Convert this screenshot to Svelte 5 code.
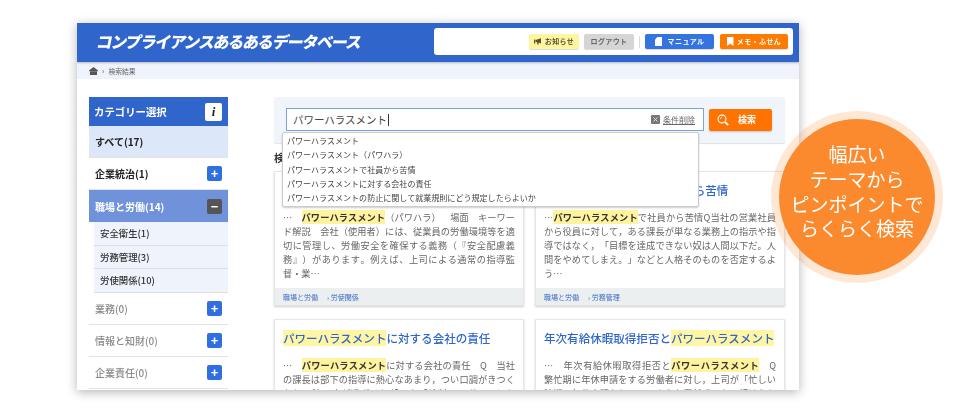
<script>
  const cats = [
    { name: '企業統治(1)', cls: 'on', sign: '+' },
    { name: '職場と労働(14)', cls: 'active', sign: '−' }
  ];
  const rest = ['業務(0)', '情報と知財(0)', '企業責任(0)'];
  const subs = ['安全衛生(1)', '労務管理(3)', '労使関係(10)'];
  const suggestions = [
    'パワーハラスメント',
    'パワーハラスメント（パワハラ）',
    'パワーハラスメントで社員から苦情',
    'パワーハラスメントに対する会社の責任',
    'パワーハラスメントの防止に関して就業規則にどう規定したらよいか'
  ];
</script>

<div class="stage">
  <div class="window">
    <header class="top">
      <div class="logo">コンプライアンスあるあるデータベース</div>
      <nav class="tools">
        <button class="tool notice">
          <svg width="8" height="7" viewBox="0 0 8 7"><path d="M0 1.5h1.2v4H0zM1.6 2 7 .2v5.2L4.6 4.6V6.6H3.2V4.2L1.6 3.9z" fill="#5a5130"/></svg>
          お知らせ
        </button>
        <button class="tool logout">ログアウト</button>
        <span class="sep"></span>
        <button class="tool manual">
          <svg width="7" height="9" viewBox="0 0 7 9"><path d="M2.4 0H7v9H0V2.6z" fill="#fff"/></svg>
          マニュアル
        </button>
        <button class="tool memo">
          <svg width="7" height="9" viewBox="0 0 7 9"><path d="M0 0h6.5v9L3.25 6.8 0 9z" fill="#fff"/></svg>
          メモ・ふせん
        </button>
      </nav>
    </header>
    <div class="crumbs">
      <svg width="9" height="8" viewBox="0 0 9 8"><path d="M4.5 0 9 3.6v.6H0v-.6zM1 4.6h7V8H1z" fill="#555"/></svg>
      <span class="gt">›</span>
      <span>検索結果</span>
    </div>

    <div class="body">
      <aside class="side">
        <div class="side-head"><span>カテゴリー選択</span><b class="info">i</b></div>
        <div class="row all">すべて(17)</div>
        {#each cats as c}
          <div class="row {c.cls}">
            <span>{c.name}</span>
            <i class="pm" class:minus={c.sign === '−'}>{c.sign}</i>
          </div>
        {/each}
        <div class="subs">
          {#each subs as s}<div class="sub">{s}</div>{/each}
        </div>
        {#each rest as r}
          <div class="row off"><span>{r}</span><i class="pm">+</i></div>
        {/each}
      </aside>

      <main class="main">
        <section class="search">
          <div class="input">
            <span class="q">パワーハラスメント</span><span class="caret"></span>
            <span class="clear">
              <svg width="9" height="9" viewBox="0 0 9 9"><rect width="9" height="9" rx="1" fill="#777"/><path d="M2.5 2.5l4 4M6.5 2.5l-4 4" stroke="#ddd" stroke-width="1"/></svg>
              <u>条件削除</u>
            </span>
          </div>
          <button class="go">
            <svg width="12" height="12" viewBox="0 0 12 12" fill="none" stroke="#fff"><circle cx="5" cy="5" r="3.9" stroke-width="1.1"/><path d="M8 8l3.2 3.2" stroke-width="1.8"/><path d="M3.4 5a1.6 1.6 0 0 1 1.6-1.6" stroke-width=".8"/></svg>
            <span>検索</span>
          </button>
          <ul class="suggest">
            {#each suggestions as s}<li>{s}</li>{/each}
          </ul>
        </section>

        <h2 class="count">検索結果</h2>

        <div class="cards">
          <article class="card">
            <h3><mark>パワーハラスメント</mark>（パワハラ）</h3>
            <p>
              <span class="l">…　<mark>パワーハラスメント</mark>（パワハラ）　場面　キーワー</span>
              <span class="l">ド解説　会社（使用者）には、従業員の労働環境等を適</span>
              <span class="l">切に管理し、労働安全を確保する義務（『安全配慮義</span>
              <span class="l">務』）があります。例えば、上司による通常の指導監</span>
              <span class="l end">督・業…</span>
            </p>
            <footer><span>職場と労働</span><span class="path">› 労使関係</span></footer>
          </article>
          <article class="card">
            <h3><mark>パワーハラスメント</mark>で社員から苦情</h3>
            <p>
              <span class="l">…<mark>パワーハラスメント</mark>で社員から苦情Q当社の営業社員</span>
              <span class="l">から役員に対して，ある課長が単なる業務上の指示や指</span>
              <span class="l">導ではなく，「目標を達成できない奴は人間以下だ。人</span>
              <span class="l">間をやめてしまえ。」などと人格そのものを否定するよ</span>
              <span class="l end">う…</span>
            </p>
            <footer><span>職場と労働</span><span class="path">› 労務管理</span></footer>
          </article>
          <article class="card">
            <h3><mark>パワーハラスメント</mark>に対する会社の責任</h3>
            <p>
              <span class="l">…　<mark>パワーハラスメント</mark>に対する会社の責任　Q　当社</span>
              <span class="l">の課長は部下の指導に熱心なあまり，つい口調がきつく</span>
              <span class="l">なり，時に度が過ぎるし部下を「給料ドロボー」とか</span>
            </p>
          </article>
          <article class="card">
            <h3>年次有給休暇取得拒否と<mark>パワーハラスメント</mark></h3>
            <p>
              <span class="l">…　年次有給休暇取得拒否と<mark>パワーハラスメント</mark>　Q</span>
              <span class="l">繁忙期に年休申請をする労働者に対し，上司が「忙しい</span>
              <span class="l">時期に年休申請をしてくるような責任感のない奴はうち</span>
            </p>
          </article>
        </div>
      </main>
    </div>
  </div>

  <div class="badge">
    <span>幅広い</span><span>テーマから</span><span>ピンポイントで</span><span>らくらく検索</span>
  </div>
</div>

<style>
  :global(body) { margin: 0; background: #fff; }
  .stage {
    position: relative; width: 980px; height: 420px; padding: 23px 0 0 77px;
    box-sizing: border-box; overflow: hidden;
    font-family: "Noto Sans CJK JP", "Noto Sans", sans-serif; color: #333;
    filter: blur(.3px);
  }
  .window {
    width: 722px; height: 367px; overflow: hidden; background: #fff;
    box-shadow: 0 2px 10px rgba(0,0,0,.3);
  }
  .top {
    height: 39px; box-sizing: border-box; background: #3066cc;
    display: flex; align-items: flex-start; padding: 5px 6px 0 17px;
    box-shadow: 0 1px 2px rgba(0,0,0,.25); position: relative;
  }
  .logo {
    width: 340px; color: #fff; font-size: 16px; font-weight: 900; line-height: 27px;
    letter-spacing: -1.2px; transform: skewX(-12deg); transform-origin: left bottom;
    white-space: nowrap;
  }
  .tools {
    width: 359px; height: 27px; box-sizing: border-box; background: #fff; border-radius: 3px;
    display: flex; align-items: center; justify-content: flex-end; padding: 0 5px 0 0; gap: 5px;
  }
  .tool {
    height: 15px; border: 0; border-radius: 2px; padding: 0; margin: 0;
    display: flex; align-items: center; justify-content: center; gap: 3px;
    font: 700 7px/15px "Noto Sans CJK JP", sans-serif; letter-spacing: .4px;
    box-shadow: 0 1px 1px rgba(0,0,0,.15);
  }
  .notice { width: 50px; background: #fdf5a0; color: #5a5130; }
  .logout { width: 50px; background: #d5d5d5; color: #666; }
  .sep { width: 1px; height: 12px; background: #ddd; }
  .manual { width: 69px; background: #3374e0; color: #fff; gap: 6px; }
  .memo { width: 68px; background: #ff7a00; color: #fff; margin-left: 1px; }
  .crumbs {
    height: 17px; background: #eff3fb; display: flex; align-items: center; gap: 4px;
    padding-left: 12px; font-size: 6.8px; color: #666;
  }
  .gt { font-size: 8px; line-height: 8px; }
  .body { display: flex; gap: 46px; padding: 18px 14px 0 12px; }
  .side { width: 139px; flex: none; }
  .side-head {
    height: 29px; background: #3066cc; color: #fff; display: flex; align-items: center;
    justify-content: space-between; padding: 0 6px 0 5px; font-size: 10.4px; font-weight: 700;
  }
  .info {
    width: 17px; height: 18px; background: #fff; border-radius: 2px; color: #222; text-align: center;
    font: italic 700 13px/18px "Liberation Serif", serif;
  }
  .row {
    height: 32px; box-sizing: border-box; display: flex; align-items: center;
    justify-content: space-between; padding: 0 6px; font-size: 10px; font-weight: 700;
    border-bottom: 1px solid #e2e2e2;
  }
  .all { background: #dce7fa; color: #222; }
  .on { color: #222; }
  .active { background: #6f92da; color: #fff; border-bottom: 0; }
  .off { color: #8a8a8a; font-weight: 500; }
  .pm {
    width: 15px; height: 15px; background: #2f6fe0; color: #fff; border-radius: 2px; text-align: center;
    font: 700 13px/15px "Liberation Sans", sans-serif;
  }
  .minus { background: #555; }
  .subs { margin-left: 5px; }
  .sub {
    height: 23.5px; box-sizing: border-box; display: flex; align-items: center; padding-left: 6px;
    background: #eff3fb; border-bottom: 1px solid #dedede; font-size: 9.4px; font-weight: 500; color: #333;
  }
  .main { width: 511px; flex: none; }
  .search {
    position: relative; height: 46px; box-sizing: border-box; padding: 11px 13px 0 12px;
    background: #f0f4fb; display: flex; gap: 5px; align-items: flex-start;
    border-radius: 2px; box-shadow: 0 1px 1px rgba(0,0,0,.12);
  }
  .input {
    width: 418px; height: 23px; box-sizing: border-box; background: #fff; border: 1px solid #7fa2dc;
    display: flex; align-items: center; padding: 0 8px 0 6px; font-size: 10.5px; color: #444;
  }
  .caret { width: 1px; height: 12px; background: #333; margin-left: 1px; }
  .clear {
    margin-left: auto; display: flex; align-items: center; gap: 3px; font-size: 8px; color: #666;
  }
  .go {
    width: 63px; height: 22px; border: 0; padding: 0 8px 0 0; margin-top: 1px; border-radius: 2px; box-sizing: border-box;
    background: #ff7300; color: #fff; display: flex; align-items: center; justify-content: center; gap: 9px;
    font: 700 9px/22px "Noto Sans CJK JP", sans-serif;
    box-shadow: 0 1px 2px rgba(0,0,0,.2);
  }
  .suggest {
    position: absolute; left: 8px; top: 35px; width: 417px; height: 75px; box-sizing: border-box;
    margin: 0; padding: 1px 4px; list-style: none; background: #fff; z-index: 2;
    border: 1px solid #ccc; border-radius: 2px; box-shadow: 0 1px 2px rgba(0,0,0,.2);
    font-size: 8.05px; line-height: 14.3px; color: #444; white-space: nowrap;
  }
  .count { margin: 0; height: 28px; font-size: 10.5px; line-height: 30px; font-weight: 700; color: #333; }
  .cards { display: grid; grid-template-columns: 250px 250px; gap: 13px 11px; }
  .card {
    box-sizing: border-box; background: #fff; display: flex; flex-direction: column;
    border: 1px solid #e6e6e6; box-shadow: 0 1px 2px rgba(0,0,0,.2);
  }
  .card h3 {
    margin: 0; padding: 10px 8px 0; font-size: 11.55px; line-height: 16px; font-weight: 500;
    color: #3066cc; white-space: nowrap;
  }
  .card h3 mark { background: #fff6a3; color: #3066cc; }
  .card p {
    margin: 12px 8px 8px; height: 70px; font-size: 9.2px; line-height: 14px; color: #666;
    text-spacing-trim: space-all; font-kerning: none;
  }
  .l { display: block; white-space: nowrap; text-align: justify; text-align-last: justify; }
  .l.end { text-align-last: left; }
  .card p mark { background: #fff3a0; color: #333; font-weight: 700; }
  .card footer {
    height: 17px; background: #eceff0; display: flex; gap: 9px; align-items: center; padding: 0 8px;
    font-size: 7px; color: #3f6cc4;
  }
  .badge {
    position: absolute; left: 771px; top: 111px; width: 172px; height: 172px; box-sizing: border-box;
    border-radius: 50%; border: 8px solid rgba(251,138,46,.2); background: #fb8a2e; background-clip: padding-box;
    color: #fff; font-size: 19px; line-height: 24.6px; font-weight: 400; padding-bottom: 11px;
    display: flex; flex-direction: column; align-items: center; justify-content: center;
  }
</style>
